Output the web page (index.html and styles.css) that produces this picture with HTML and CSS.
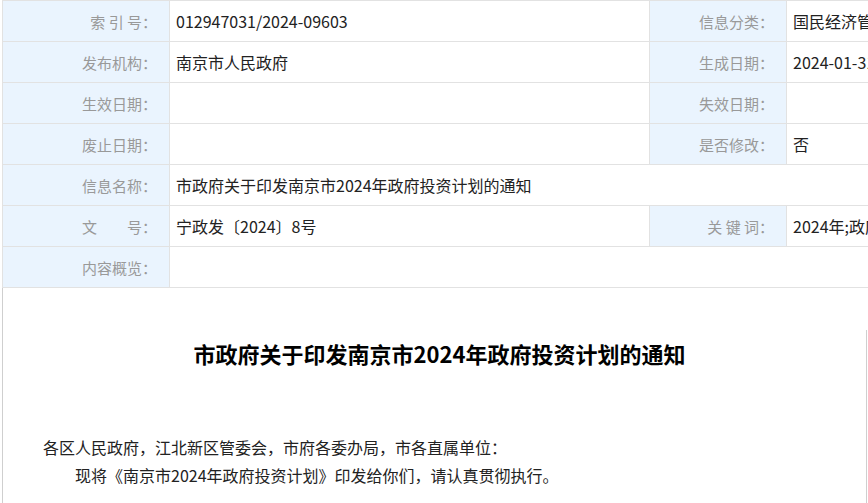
FILE: index.html
```html
<!DOCTYPE html>
<html lang="zh-CN">
<head>
    <meta charset="UTF-8">
    <title>市政府关于印发南京市2024年政府投资计划的通知</title>
    <link rel="stylesheet" href="styles.css">
</head>
<body>
    <div class="page">
        <!-- 信息公开属性表 -->
        <table class="meta">
            <colgroup>
                <col class="c-label">
                <col class="c-value">
                <col class="c-label2">
                <col class="c-value2">
            </colgroup>
            <tr>
                <td class="label">索 引 号：</td>
                <td>012947031/2024-09603</td>
                <td class="label">信息分类：</td>
                <td>国民经济管理、国有资产监管</td>
            </tr>
            <tr>
                <td class="label">发布机构：</td>
                <td>南京市人民政府</td>
                <td class="label">生成日期：</td>
                <td>2024-01-31</td>
            </tr>
            <tr>
                <td class="label">生效日期：</td>
                <td></td>
                <td class="label">失效日期：</td>
                <td></td>
            </tr>
            <tr>
                <td class="label">废止日期：</td>
                <td></td>
                <td class="label">是否修改：</td>
                <td>否</td>
            </tr>
            <tr>
                <td class="label">信息名称：</td>
                <td colspan="3">市政府关于印发南京市2024年政府投资计划的通知</td>
            </tr>
            <tr>
                <td class="label">文　　号：</td>
                <td>宁政发〔2024〕8号</td>
                <td class="label">关 键 词：</td>
                <td>2024年;政府投资计划</td>
            </tr>
            <tr>
                <td class="label">内容概览：</td>
                <td colspan="3"></td>
            </tr>
        </table>

        <!-- 正文 -->
        <div class="article">
            <div class="article-inner">
                <h1 class="title">市政府关于印发南京市2024年政府投资计划的通知</h1>
                <p class="lead">各区人民政府，江北新区管委会，市府各委办局，市各直属单位：</p>
                <p class="para">现将《南京市2024年政府投资计划》印发给你们，请认真贯彻执行。</p>
            </div>
        </div>
    </div>
</body>
</html>
```

FILE: styles.css
```css
/* 页面基础 */
body {
    margin: 0;
    overflow: hidden;
    font-family: "Noto Sans CJK SC", "Microsoft YaHei", sans-serif;
    background: #fff;
    color: #333;
}

.page {
    margin-left: 2px;
    width: 1000px;
    border-left: 1px solid #cfcfcf;
}

/* 属性表 */
.meta {
    width: 1000px;
    border-collapse: collapse;
    table-layout: fixed;
    margin-left: -1px;
}

.c-label { width: 167px; }
.c-value { width: 480px; }
.c-label2 { width: 137px; }

.meta td {
    height: 40px;
    padding: 0 0 0 6px;
    border: 1px solid #e2e2e2;
    font-size: 16px;
    color: #222;
    white-space: nowrap;
    overflow: hidden;
    vertical-align: middle;
}

.meta td.label {
    background: #eaf4fe;
    color: #999;
    font-size: 15px;
    text-align: right;
    padding: 0 12px 0 0;
}

/* 正文 */
.article-inner {
    width: 863px;
    margin-top: 42px;
    border-right: 1px solid #cfcfcf;
    padding-top: 8px;
    height: 200px;
}

.title {
    margin: 0;
    text-align: center;
    font-size: 22px;
    font-weight: bold;
    color: #000;
    line-height: 30px;
    padding-left: 10px;
}

.lead, .para {
    margin: 0;
    font-size: 16px;
    line-height: 28px;
    color: #222;
}

.lead {
    margin-top: 65px;
    padding-left: 40px;
}

.para {
    padding-left: 72px;
}
```
